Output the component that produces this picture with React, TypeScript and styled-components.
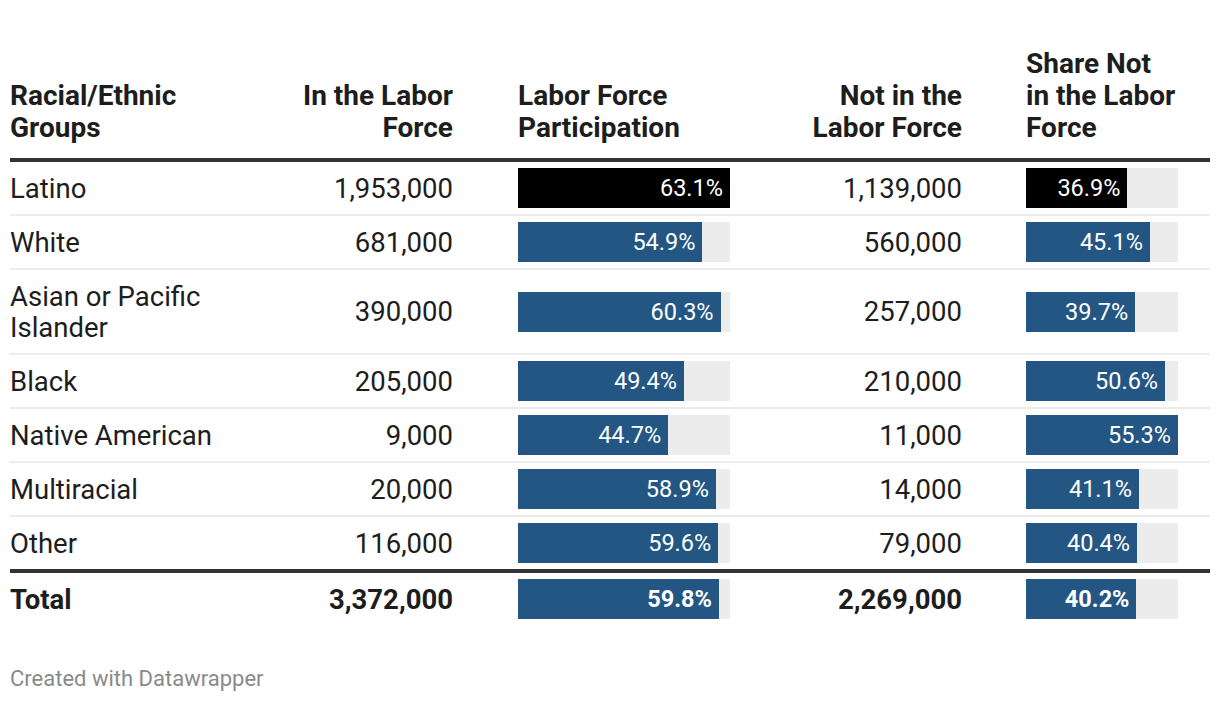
import React from "react";
import styled, { createGlobalStyle } from "styled-components";

const GlobalStyle = createGlobalStyle`
  body {
    margin: 0;
    background: #fff;
    font-family: Roboto, "Liberation Sans", sans-serif;
    color: #1d1d1d;
  }
`;

const Page = styled.div`
  padding: 48px 10px 0;
  width: 1200px;
`;

// five columns: name, in force, participation bar, not in force, share bar
const Row = styled.div<{ $kind?: "head" | "body" | "last" | "total" }>`
  display: grid;
  grid-template-columns: 280px 163px 277px 232px 248px;
  align-items: ${(p) => (p.$kind === "head" ? "end" : "center")};
  padding-bottom: ${(p) => (p.$kind === "head" ? "14px" : "0")};
  border-bottom: ${(p) =>
    p.$kind === "head" || p.$kind === "last"
      ? "4px solid #333"
      : p.$kind === "total"
      ? "none"
      : "2px solid #ececec"};
  font-size: ${(p) => (p.$kind === "head" ? "28px" : "27.5px")};
  font-weight: ${(p) => (p.$kind === "head" || p.$kind === "total" ? 700 : 400)};
  line-height: ${(p) => (p.$kind === "head" ? "32px" : "31px")};
`;

const Cell = styled.div<{ $align?: "left" | "right"; $pad?: number }>`
  text-align: ${(p) => p.$align || "left"};
  padding-left: ${(p) => p.$pad || 0}px;
`;

const TextCell = styled(Cell)<{ $head?: boolean }>`
  padding-top: ${(p) => (p.$head ? 0 : 10.5)}px;
  padding-bottom: ${(p) => (p.$head ? 0 : 10.5)}px;
`;

const BarCell = styled(Cell)`
  padding-top: 6px;
  padding-bottom: 6px;
`;

const Track = styled.div<{ $w: number }>`
  width: ${(p) => p.$w}px;
  height: 40px;
  background: #ececec;
  display: flex;
`;

const Fill = styled.div<{ $dark?: boolean }>`
  height: 100%;
  background: ${(p) => (p.$dark ? "#000" : "#235683")};
  color: #fff;
  font-size: 23.5px;
  line-height: 40px;
  text-align: right;
  padding-right: 7px;
  box-sizing: border-box;
  white-space: nowrap;
`;

const Footer = styled.div`
  margin-top: 41px;
  font-size: 22px;
  line-height: 26px;
  color: #8a8a8a;
`;

type Item = {
  name: React.ReactNode;
  inForce: string;
  part: number;
  notIn: string;
  share: number;
};

const rows: Item[] = [
  { name: "Latino", inForce: "1,953,000", part: 63.1, notIn: "1,139,000", share: 36.9 },
  { name: "White", inForce: "681,000", part: 54.9, notIn: "560,000", share: 45.1 },
  {
    name: (
      <>
        Asian or Pacific
        <br />
        Islander
      </>
    ),
    inForce: "390,000",
    part: 60.3,
    notIn: "257,000",
    share: 39.7,
  },
  { name: "Black", inForce: "205,000", part: 49.4, notIn: "210,000", share: 50.6 },
  { name: "Native American", inForce: "9,000", part: 44.7, notIn: "11,000", share: 55.3 },
  { name: "Multiracial", inForce: "20,000", part: 58.9, notIn: "14,000", share: 41.1 },
  { name: "Other", inForce: "116,000", part: 59.6, notIn: "79,000", share: 40.4 },
];

const PART_MAX = 63.1;
const SHARE_MAX = 55.3;

function Bar({ value, max, width, dark }: { value: number; max: number; width: number; dark?: boolean }) {
  return (
    <Track $w={width}>
      <Fill $dark={dark} style={{ width: `${(value / max) * width}px` }}>
        {value.toFixed(1)}%
      </Fill>
    </Track>
  );
}

export default function App() {
  return (
    <Page>
      <GlobalStyle />
      <Row $kind="head">
        <TextCell $head>
          Racial/Ethnic
          <br />
          Groups
        </TextCell>
        <TextCell $head $align="right">
          In the Labor
          <br />
          Force
        </TextCell>
        <TextCell $head $pad={65}>
          Labor Force
          <br />
          Participation
        </TextCell>
        <TextCell $head $align="right">
          Not in the
          <br />
          Labor Force
        </TextCell>
        <TextCell $head $pad={64}>
          Share Not
          <br />
          in the Labor
          <br />
          Force
        </TextCell>
      </Row>
      {rows.map((r, i) => (
        <Row key={i} $kind={i === rows.length - 1 ? "last" : "body"}>
          <TextCell>{r.name}</TextCell>
          <TextCell $align="right">{r.inForce}</TextCell>
          <BarCell $pad={65}>
            <Bar value={r.part} max={PART_MAX} width={212} dark={i === 0} />
          </BarCell>
          <TextCell $align="right">{r.notIn}</TextCell>
          <BarCell $pad={64}>
            <Bar value={r.share} max={SHARE_MAX} width={152} dark={i === 0} />
          </BarCell>
        </Row>
      ))}
      <Row $kind="total">
        <TextCell>Total</TextCell>
        <TextCell $align="right">3,372,000</TextCell>
        <BarCell $pad={65}>
          <Bar value={59.8} max={PART_MAX} width={212} />
        </BarCell>
        <TextCell $align="right">2,269,000</TextCell>
        <BarCell $pad={64}>
          <Bar value={40.2} max={SHARE_MAX} width={152} />
        </BarCell>
      </Row>
      <Footer>Created with Datawrapper</Footer>
    </Page>
  );
}
